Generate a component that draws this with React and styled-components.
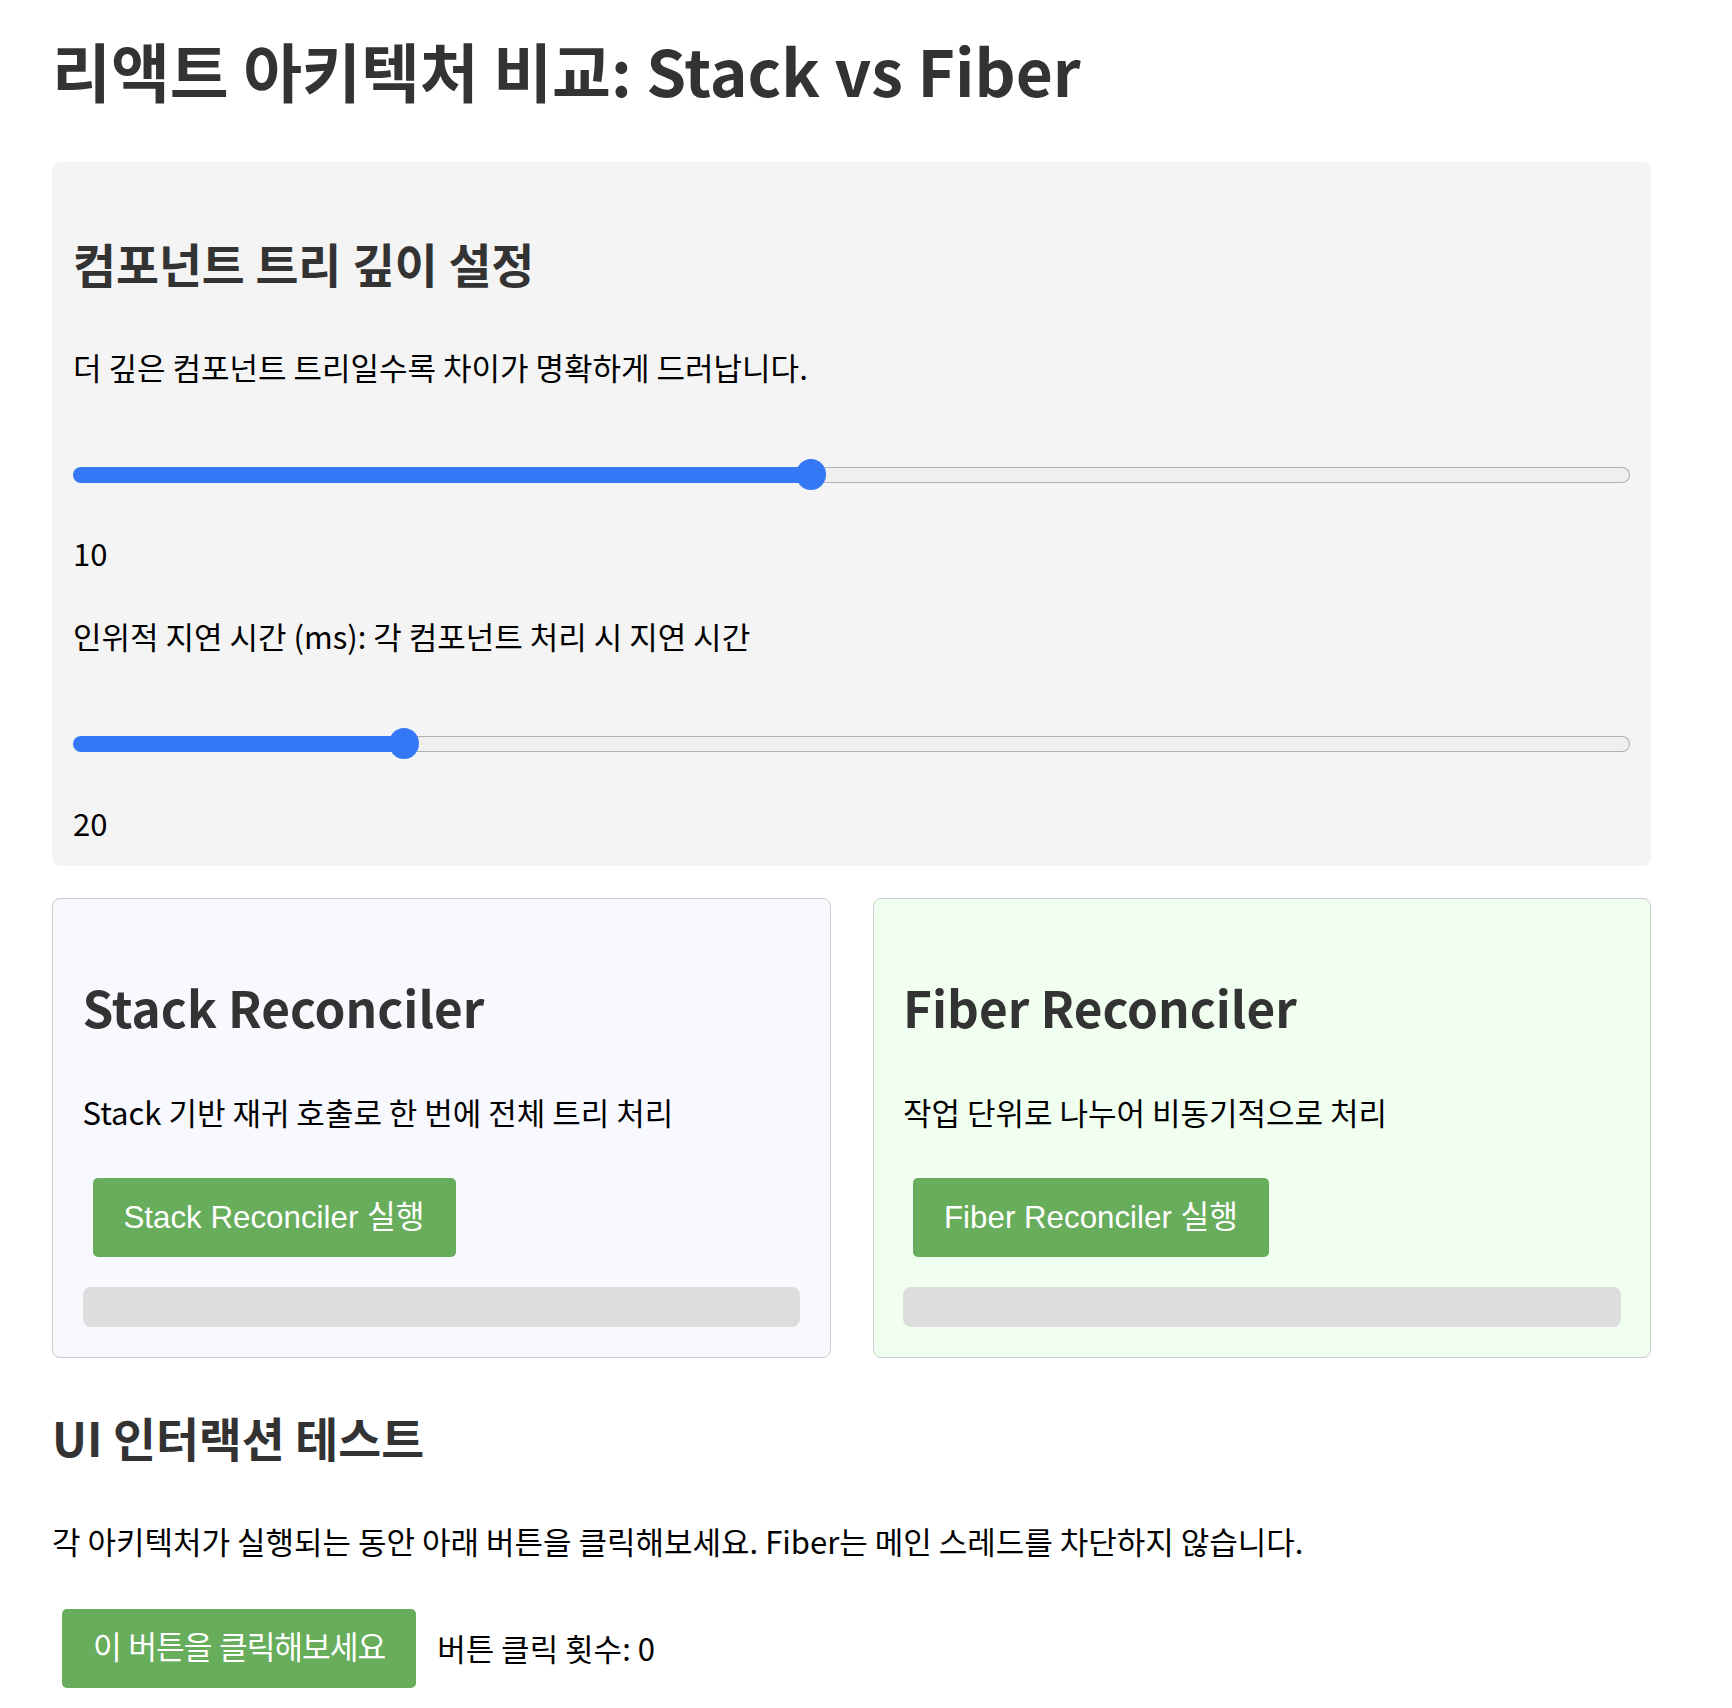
import React, { useState } from "react";
import styled, { createGlobalStyle } from "styled-components";

const GlobalStyle = createGlobalStyle`
  html, body {
    margin: 0;
    padding: 0;
    background: #ffffff;
  }
  body {
    font-family: "Noto Sans CJK KR", "Noto Sans", sans-serif;
    color: #000000;
  }
  * { box-sizing: border-box; }
`;

const Page = styled.div`
  padding: 0 81px 20px 52px;
`;

const Title = styled.h1`
  margin: 31px 0 0;
  font-size: 64px;
  line-height: 76px;
  font-weight: 700;
  color: #333333;
`;

const Panel = styled.section`
  margin-top: 55px;
  background: #f4f4f4;
  border-radius: 8px;
  padding: 74px 21px 25px;
`;

const SectionTitle = styled.h2`
  margin: ${(p) => p.$mt || 0}px 0 0;
  font-size: 46.7px;
  line-height: 53px;
  font-weight: 700;
  color: #333333;
`;

const Text = styled.p`
  margin: ${(p) => p.$mt || 0}px 0 0;
  font-size: 31px;
  line-height: 36px;
  color: #000000;
  white-space: nowrap;
`;

const ControlGroup = styled.div`
  margin-top: ${(p) => p.$mt}px;
`;

const Range = styled.input.attrs({ type: "range" })`
  -webkit-appearance: none;
  appearance: none;
  display: block;
  width: 100%;
  height: 31px;
  margin: 74.5px 0 0;
  background: transparent;

  &::-webkit-slider-runnable-track {
    height: 16px;
    border-radius: 8px;
    border: 1.5px solid transparent;
    background:
      linear-gradient(
          to right,
          #3478f6 calc(15px + ${(p) => p.$fill} * (100% - 30px)),
          transparent 0
        )
        border-box,
      linear-gradient(#efefef, #efefef) padding-box,
      linear-gradient(#b0b0b0, #b0b0b0) border-box;
  }
  &::-webkit-slider-thumb {
    -webkit-appearance: none;
    appearance: none;
    width: 30px;
    height: 31px;
    margin-top: -9px;
    border-radius: 50%;
    background: #3478f6;
    border: none;
  }
`;

const Value = styled.div`
  margin-top: 45px;
  font-size: 31px;
  line-height: 36px;
`;

const Cards = styled.div`
  display: grid;
  grid-template-columns: 1fr 1fr;
  gap: 42px;
  margin-top: 32px;
`;

const Card = styled.div`
  border: 1.5px solid #cccccc;
  border-radius: 8px;
  background: ${(p) => p.$bg};
  padding: 78.5px 29.5px 29.5px;
`;

const CardTitle = styled.h2`
  margin: 0;
  font-size: 49.5px;
  line-height: 60px;
  font-weight: 700;
  color: #333333;
`;

const ButtonRow = styled.div`
  display: flex;
  align-items: center;
  margin-top: ${(p) => p.$mt}px;
`;

const Button = styled.button`
  margin: 10px;
  padding: 21px 31px;
  border: none;
  border-radius: 5px;
  background: #67ad5b;
  color: #ffffff;
  font-family: "Liberation Sans", Arial, "Noto Sans CJK KR", sans-serif;
  font-size: 31.3px;
  line-height: 37px;
  letter-spacing: ${(p) => (p.$tight ? "-1.1px" : "0")};
  cursor: pointer;
  white-space: nowrap;
`;

const Progress = styled.div`
  margin-top: 20px;
  height: 40px;
  border-radius: 8px;
  background: #dddddd;
  overflow: hidden;
`;

const ProgressFill = styled.div`
  height: 100%;
  background: #67ad5b;
`;

const Counter = styled.span`
  margin-left: 11px;
  font-size: 31px;
  line-height: 36px;
  white-space: nowrap;
`;

export default function App() {
  const [depth, setDepth] = useState(10);
  const [delay, setDelay] = useState(20);
  const [clicks, setClicks] = useState(0);
  const [stackProgress] = useState(0);
  const [fiberProgress] = useState(0);

  const depthMin = 1;
  const depthMax = 20;
  const delayMin = 1;
  const delayMax = 93;

  return (
    <>
      <GlobalStyle />
      <Page>
        <Title>리액트 아키텍처 비교: Stack vs Fiber</Title>

        <Panel>
          <SectionTitle>컴포넌트 트리 깊이 설정</SectionTitle>
          <ControlGroup $mt={59.5}>
            <Text>더 깊은 컴포넌트 트리일수록 차이가 명확하게 드러납니다.</Text>
            <Range
              min={depthMin}
              max={depthMax}
              value={depth}
              $fill={(depth - depthMin) / (depthMax - depthMin)}
              onChange={(e) => setDepth(Number(e.target.value))}
            />
            <Value>{depth}</Value>
          </ControlGroup>
          <ControlGroup $mt={47}>
            <Text>인위적 지연 시간 (ms): 각 컴포넌트 처리 시 지연 시간</Text>
            <Range
              min={delayMin}
              max={delayMax}
              value={delay}
              $fill={(delay - delayMin) / (delayMax - delayMin)}
              onChange={(e) => setDelay(Number(e.target.value))}
            />
            <Value>{delay}</Value>
          </ControlGroup>
        </Panel>

        <Cards>
          <Card $bg="#f8f8ff">
            <CardTitle>Stack Reconciler</CardTitle>
            <Text $mt={57}>Stack 기반 재귀 호출로 한 번에 전체 트리 처리</Text>
            <ButtonRow $mt={38}>
              <Button>Stack Reconciler 실행</Button>
            </ButtonRow>
            <Progress>
              <ProgressFill style={{ width: `${stackProgress}%` }} />
            </Progress>
          </Card>
          <Card $bg="#f0fff0">
            <CardTitle>Fiber Reconciler</CardTitle>
            <Text $mt={57}>작업 단위로 나누어 비동기적으로 처리</Text>
            <ButtonRow $mt={38}>
              <Button>Fiber Reconciler 실행</Button>
            </ButtonRow>
            <Progress>
              <ProgressFill style={{ width: `${fiberProgress}%` }} />
            </Progress>
          </Card>
        </Cards>

        <SectionTitle $mt={52.5}>UI 인터랙션 테스트</SectionTitle>
        <Text $mt={59.5}>
          각 아키텍처가 실행되는 동안 아래 버튼을 클릭해보세요. Fiber는 메인 스레드를 차단하지 않습니다.
        </Text>
        <ButtonRow $mt={40}>
          <Button $tight onClick={() => setClicks((c) => c + 1)}>
            이 버튼을 클릭해보세요
          </Button>
          <Counter>버튼 클릭 횟수: {clicks}</Counter>
        </ButtonRow>
      </Page>
    </>
  );
}
